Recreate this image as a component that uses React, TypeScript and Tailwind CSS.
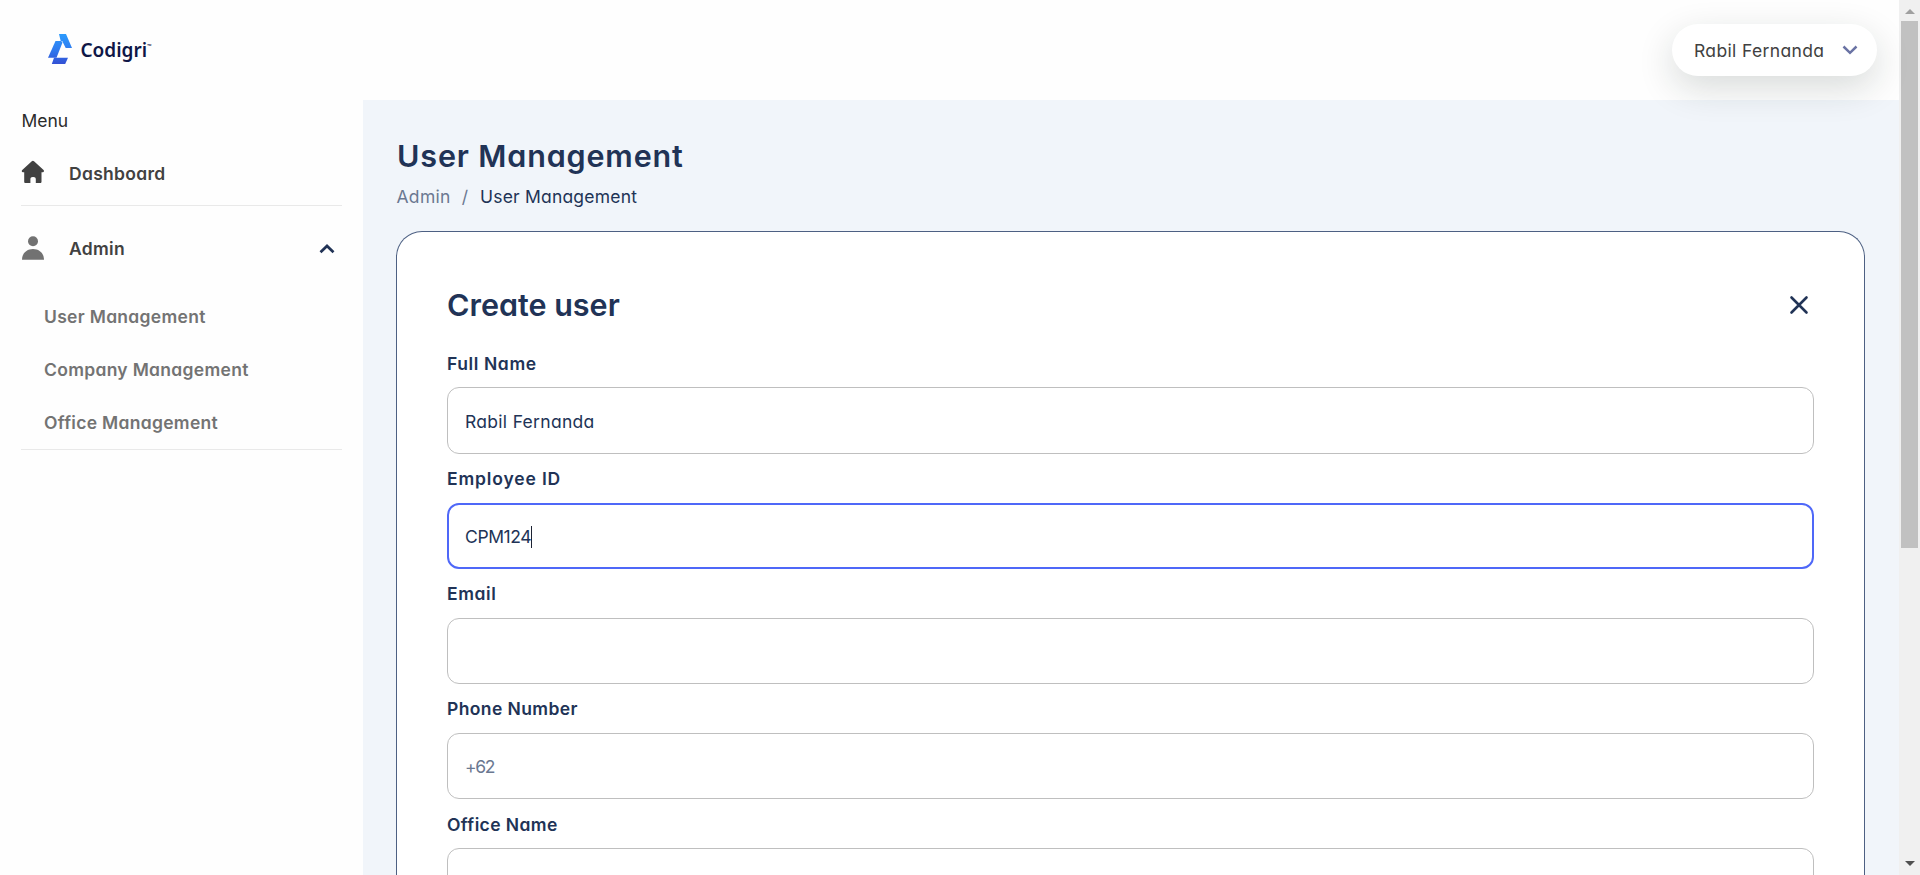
type FieldProps = {
  label: string;
  labelClass: string;
  value?: string;
  valueClass?: string;
  active?: boolean;
};

function Field({ label, labelClass, value, valueClass = "", active }: FieldProps) {
  return (
    <div className="shrink-0">
      <div className={`flex h-[48.75px] items-center pt-[2px] text-[17.5px] font-semibold leading-6 text-[#213356] ${labelClass}`}>
        {label}
      </div>
      <div
        className={`flex h-[66.4px] items-center rounded-[12px] bg-white pt-[2px] text-[17.5px] leading-6 text-[#213356] ${
          active ? "border-2 border-[#4f68f8] pl-4" : "border border-[#bfbfbf] pl-[17px]"
        }`}
      >
        <span className={valueClass}>{value}</span>
        {active && <span className="h-[22px] w-px bg-[#1c2333]" />}
      </div>
    </div>
  );
}

function Logo() {
  return (
    <div className="flex h-[99px] items-start pl-12 pt-[34px]">
      <svg width="24" height="30" viewBox="0 0 24 30">
        <defs>
          <linearGradient id="mark" x1="0" y1="0" x2="0" y2="30" gradientUnits="userSpaceOnUse">
            <stop offset="0" stopColor="#2b9bfd" />
            <stop offset="0.5" stopColor="#2f7cf0" />
            <stop offset="1" stopColor="#3350d4" />
          </linearGradient>
        </defs>
        <path d="M11 0h7l6 14h-6.3L14.2 7h-1.5z" fill="url(#mark)" />
        <path d="M7.500 7h5.700l1.300 1.500L8.500 23.800H0z" fill="url(#mark)" />
        <path d="M6 23.800h14L17.200 30H3.800z" fill="url(#mark)" />
      </svg>
      <span className="ml-[8.5px] mt-[3.5px] font-['Noto_Sans',sans-serif] text-[19px] font-semibold leading-6 tracking-[0px] text-[#0f1747]">
        Codigri
      </span>
      <span className="mt-[9px] font-['Noto_Sans',sans-serif] text-[5.5px] leading-[6px] text-[#0f1747]">™</span>
    </div>
  );
}

function Sidebar() {
  return (
    <aside className="flex w-[363px] shrink-0 flex-col bg-[#fefefe]">
      <Logo />
      <nav className="ml-[21px] w-[321px] text-[17.5px] font-semibold leading-6 tracking-[0.3px]">
        <div className="flex h-[44px] items-center pl-[0.5px] font-normal tracking-[0px] text-[#2b2b2b]">Menu</div>
        <div className="flex h-[63px] items-center border-b border-[#e9e9e9] text-[#414141]">
          <svg className="-mt-[5px]" width="24" height="24" viewBox="0 0 24 24" fill="#414141">
            <path d="M10.8 1.2a1.7 1.7 0 0 1 2.2 0l9.3 8.6c1.2 1.1.8 2.4-.6 2.4h-1.2v9.5c0 .8-.5 1.3-1.3 1.3h-4.4v-3.800c0-1.500-.8-2.200-2.400-2.200h-.6c-1.600 0-2.400.7-2.400 2.200V23H4.500c-.8 0-1.300-.5-1.300-1.300v-9.500H2C.6 12.200.3 10.900 1.500 9.800z" />
          </svg>
          <span className="ml-[24px]">Dashboard</span>
        </div>
        <div className="flex h-[85px] items-center text-[#414141]">
          <svg className="-mt-[2px]" width="24" height="24" viewBox="0 0 24 24" fill="#727272">
            <circle cx="12" cy="5.300" r="5" />
            <path d="M1 23.800C1 17.500 5.500 13 12 13s11 4.500 11 10.800z" />
          </svg>
          <span className="ml-[24px]">Admin</span>
          <svg className="ml-auto mr-[7px]" width="16" height="10" viewBox="0 0 16 10" fill="none" stroke="#213356" strokeWidth="2.700">
            <path d="M1.500 8.300 8 2l6.500 6.300" />
          </svg>
        </div>
        <div className="flex h-[159px] flex-col border-b border-[#e9e9e9] pl-[23px] text-[#737373]">
          <div className="flex h-[53px] shrink-0 items-center pb-px">User Management</div>
          <div className="flex h-[53px] shrink-0 items-center pb-px">Company Management</div>
          <div className="flex h-[53px] shrink-0 items-center pb-px">Office Management</div>
        </div>
      </nav>
    </aside>
  );
}

function Header() {
  return (
    <header className="flex h-[100px] shrink-0 justify-end bg-[#fefefe] pr-[22px] pt-6">
      <button className="relative flex h-[52px] w-[205px] items-center rounded-full bg-white pl-[22px] text-[17.5px] leading-6 tracking-[0.35px] text-[#414141] shadow-[0_12px_36px_rgba(20,40,30,0.16)]">
        <span className="mt-[2px]">Rabil Fernanda</span>
        <svg className="ml-auto mr-[19px]" width="16" height="10" viewBox="0 0 16 10" fill="none" stroke="#6a73a4" strokeWidth="2.500">
          <path d="M1.500 1.500 8 7.800l6.500-6.300" />
        </svg>
      </button>
    </header>
  );
}

function Scrollbar() {
  return (
    <div className="flex w-[21px] shrink-0 flex-col items-center bg-[#f0f0f0]">
      <div className="flex h-[21px] items-center">
        <svg className="mt-[2px]" width="10" height="5" viewBox="0 0 10 5" fill="#a0a0a0">
          <path d="M5 0 10 5H0z" />
        </svg>
      </div>
      <div className="h-[527px] w-[17px] bg-[#c1c1c1]" />
      <svg className="mb-[9px] mt-auto" width="10" height="5" viewBox="0 0 10 5" fill="#505050">
        <path d="M0 0h10L5 5z" />
      </svg>
    </div>
  );
}

export default function App() {
  return (
    <div className="flex h-[875px] w-full overflow-hidden bg-[#f1f5fa] font-[Inter,sans-serif] [font-feature-settings:'cv11']">
      <Sidebar />
      <div className="flex min-w-0 flex-1 flex-col">
        <Header />
        <main className="flex min-h-0 flex-1 flex-col pl-[33px] pr-[34px] pt-9">
          <h1 className="h-10 shrink-0 pl-px text-[30.5px] font-semibold leading-10 tracking-[0.85px] text-[#213356]">User Management</h1>
          <div className="flex h-[55px] shrink-0 pt-[9px] text-[17.5px] leading-6 text-[#213356]">
            <span className="pl-[0.5px] tracking-[0.3px] text-[#6b7891]">Admin</span>
            <span className="ml-[11px] mr-[12px] text-[#6b7891]">/</span>
            <span className="tracking-[0.2px]">User Management</span>
          </div>
          <section className="flex min-h-0 flex-1 flex-col overflow-hidden rounded-t-[26px] border border-b-0 border-[#4d6083] bg-white px-[50px] pt-[52px]">
            <div className="flex h-10 shrink-0 items-center justify-between">
              <h2 className="pt-px text-[30.5px] font-semibold leading-10 tracking-[0px] text-[#213356]">Create user</h2>
              <svg className="mr-[5px] mt-[2px]" width="20" height="20" viewBox="0 0 20 20" fill="none" stroke="#213356" strokeWidth="2.600" strokeLinecap="round">
                <path d="m2.500 2.500 15 15M17.500 2.500l-15 15" />
              </svg>
            </div>
            <div className="mt-[14.65px] flex flex-col">
              <Field label="Full Name" labelClass="tracking-[0.6px]" value="Rabil Fernanda" valueClass="tracking-[0.3px]" />
              <Field label="Employee ID" labelClass="tracking-[0.85px]" value="CPM124" valueClass="tracking-[-0.4px]" active />
              <Field label="Email" labelClass="tracking-[0.6px]" />
              <Field label="Phone Number" labelClass="tracking-[0.4px]" value="+62" valueClass="tracking-[-1.3px] text-[#6b7891]" />
              <Field label="Office Name" labelClass="tracking-[0.4px]" />
            </div>
          </section>
        </main>
      </div>
      <Scrollbar />
    </div>
  );
}
